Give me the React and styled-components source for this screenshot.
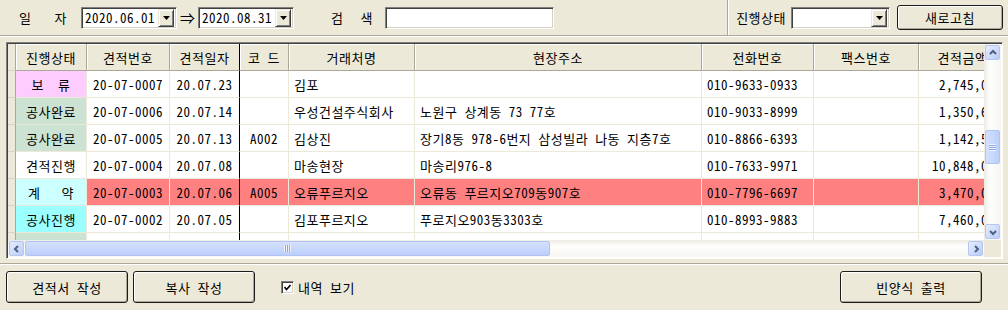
import React from 'react';
import styled, { createGlobalStyle } from 'styled-components';

const GlobalStyle = createGlobalStyle`
  html, body { margin: 0; padding: 0; background: #ECE9D8; }
  body {
    font-family: "Noto Sans CJK KR", "Noto Sans", sans-serif;
    font-size: 13px;
    letter-spacing: 0.5px;
    font-feature-settings: "hwid" 1;
    color: #000;
  }
`;

const COLS = [
  { key: 'status', title: '진행상태', w: 71, align: 'center' },
  { key: 'no', title: '견적번호', w: 83, align: 'center' },
  { key: 'date', title: '견적일자', w: 70, align: 'center', edge: true },
  { key: 'code', title: '코 드', w: 49, align: 'center' },
  { key: 'client', title: '거래처명', w: 126, align: 'left' },
  { key: 'addr', title: '현장주소', w: 287, align: 'left' },
  { key: 'tel', title: '전화번호', w: 112, align: 'left' },
  { key: 'fax', title: '팩스번호', w: 105, align: 'left' },
  { key: 'amount', title: '견적금액', w: 88, align: 'right' },
];

const TEMPLATE = '8px ' + COLS.map(c => c.w + 'px').join(' ');

const ROWS = [
  { status: '보  류', sbg: '#FFCCFF', no: '20-07-0007', date: '20.07.23', code: '', client: '김포', addr: '', tel: '010-9633-0933', fax: '', amount: '2,745,000' },
  { status: '공사완료', sbg: '#CCE2D2', no: '20-07-0006', date: '20.07.14', code: '', client: '우성건설주식회사', addr: '노원구 상계동 73 77호', tel: '010-9033-8999', fax: '', amount: '1,350,650' },
  { status: '공사완료', sbg: '#CCE2D2', no: '20-07-0005', date: '20.07.13', code: 'A002', client: '김상진', addr: '장기8동 978-6번지 삼성빌라 나동 지층7호', tel: '010-8866-6393', fax: '', amount: '1,142,500' },
  { status: '견적진행', sbg: '#FFFFFF', no: '20-07-0004', date: '20.07.08', code: '', client: '마송현장', addr: '마송리976-8', tel: '010-7633-9971', fax: '', amount: '10,848,000' },
  { status: '계   약', sbg: '#CCFFFF', bg: '#FF8080', no: '20-07-0003', date: '20.07.06', code: 'A005', client: '오류푸르지오', addr: '오류동 푸르지오709동907호', tel: '010-7796-6697', fax: '', amount: '3,470,000' },
  { status: '공사진행', sbg: '#9CFFFF', no: '20-07-0002', date: '20.07.05', code: '', client: '김포푸르지오', addr: '푸로지오903동3303호', tel: '010-8993-9883', fax: '', amount: '7,460,000' },
  { status: '', sbg: '#CCE2D2', no: '', date: '', code: '', client: '', addr: '', tel: '', fax: '', amount: '' },
];

const Page = styled.div`
  width: 1008px;
  height: 310px;
  background: #ECE9D8;
  display: flex;
  flex-direction: column;
  overflow: hidden;
`;

const TopBar = styled.div`
  height: 35px;
  flex-shrink: 0;
  display: flex;
  align-items: center;
  padding-left: 19px;
  border-bottom: 1px solid #ACA899;
  box-shadow: 0 1px 0 #fff;
`;

const SpreadLabel = styled.div`
  width: ${p => p.$w}px;
  margin-left: ${p => p.$ml || 0}px;
  display: flex;
  justify-content: space-between;
`;

const Label = styled.div`
  margin-left: ${p => p.$ml || 0}px;
  white-space: nowrap;
`;

const Sunken = styled.div`
  box-sizing: border-box;
  background: #fff;
  border: 1px solid;
  border-color: #808080 #FFFFFF #FFFFFF #808080;
  box-shadow: inset 1px 1px #404040, inset -1px -1px #D4D0C8;
`;

const Combo = styled(Sunken)`
  width: ${p => p.$w}px;
  height: 22px;
  margin-left: ${p => p.$ml || 0}px;
  display: flex;
  align-items: center;
  padding: 2px;
`;

const ComboText = styled.div`
  flex: 1;
  padding-left: 1px;
  line-height: 18px;
  white-space: nowrap;
  overflow: hidden;
`;

const DropBtn = styled.div`
  width: 16px;
  height: 18px;
  box-sizing: border-box;
  background: #ECE9D8;
  border: 1px solid;
  border-color: #ECE9D8 #404040 #404040 #ECE9D8;
  box-shadow: inset 1px 1px #fff, inset -1px -1px #808080;
  display: flex;
  align-items: center;
  justify-content: center;
`;

const ArrowSign = styled.div`
  width: 21px;
  text-align: center;
  font-size: 15px;
  letter-spacing: 0;
`;

const TextBox = styled(Sunken)`
  width: ${p => p.$w}px;
  height: 22px;
  margin-left: ${p => p.$ml || 0}px;
`;

const Divider = styled.div`
  align-self: stretch;
  margin-left: auto;
  border-left: 1px solid #ACA899;
  border-right: 1px solid #fff;
`;

const Button = styled.button`
  width: ${p => p.$w}px;
  height: ${p => p.$h}px;
  margin-left: ${p => p.$ml || 0}px;
  box-sizing: border-box;
  padding: 0;
  border: 1px solid #1C1C1C;
  border-radius: 3px;
  background: #ECE9D8;
  box-shadow: inset 1px 1px #fff, inset -1px -1px #ACA899;
  font: inherit;
  letter-spacing: inherit;
  font-feature-settings: inherit;
  color: #000;
`;

const GridFrame = styled.div`
  box-sizing: border-box;
  width: 997px;
  height: 217px;
  margin: 6px 0 0 6px;
  flex-shrink: 0;
  border: 1px solid;
  border-color: #808080 #FFFFFF #FFFFFF #808080;
  box-shadow: inset 1px 1px #404040;
  padding: 1px 0 0 1px;
  display: grid;
  grid-template-columns: 976px 17px;
  grid-template-rows: 196px 17px;
  background: #fff;
`;

const Viewport = styled.div`
  overflow: hidden;
  background: #fff;
`;

const Row = styled.div`
  display: grid;
  grid-template-columns: ${TEMPLATE};
  width: max-content;
`;

const HeadCell = styled.div`
  box-sizing: border-box;
  height: 27px;
  background: #ECE9D8;
  border-right: 1px solid ${p => (p.$edge ? '#000' : '#ACA899')};
  border-bottom: 1px solid #ACA899;
  box-shadow: inset 1px 1px #fff;
  display: flex;
  align-items: center;
  justify-content: center;
  white-space: pre;
  overflow: hidden;
`;

const IndicatorCell = styled.div`
  box-sizing: border-box;
  height: 27px;
  background: #ECE9D8;
  border-right: 1px solid #ACA899;
  border-bottom: 1px solid #D8D4C4;
`;

const Cell = styled.div`
  box-sizing: border-box;
  height: 27px;
  background: ${p => p.$bg || '#fff'};
  border-right: 1px solid ${p => (p.$edge ? '#000' : '#ECE9D8')};
  border-bottom: 1px solid #ECE9D8;
  display: flex;
  align-items: center;
  justify-content: ${p => (p.$align === 'right' ? 'flex-end' : p.$align === 'left' ? 'flex-start' : 'center')};
  padding: ${p => (p.$align === 'right' ? '0 4px 0 0' : p.$align === 'left' ? '0 0 0 5px' : '0')};
  white-space: pre;
  overflow: hidden;
`;

const HTrack = styled.div`
  display: flex;
  align-items: center;
  padding: 0 1px 0 1px;
  background: linear-gradient(to bottom, #EDEBE3, #FEFEFD 35%, #F6F5F0);
`;

const VTrack = styled.div`
  display: flex;
  flex-direction: column;
  align-items: center;
  padding: 1px 0;
  background: linear-gradient(to right, #EDEBE3, #FEFEFD 35%, #F6F5F0);
`;

const ScrollBtn = styled.div`
  width: 15px;
  height: 15px;
  box-sizing: border-box;
  flex-shrink: 0;
  border: 1px solid #B4C6F3;
  border-radius: 2px;
  background: linear-gradient(135deg, #E6EDFE, #BACDF8);
  display: flex;
  align-items: center;
  justify-content: center;
`;

const Thumb = styled.div`
  box-sizing: border-box;
  flex-shrink: 0;
  width: ${p => (p.$vertical ? '15px' : p.$len + 'px')};
  height: ${p => (p.$vertical ? p.$len + 'px' : '15px')};
  margin: ${p => (p.$vertical ? `${p.$offset}px 0 0 0` : `0 0 0 ${p.$offset}px`)};
  border: 1px solid #B0C3F2;
  border-radius: 2px;
  background: ${p => (p.$vertical
    ? 'linear-gradient(to right, #D4E0FE, #BCCFFA)'
    : 'linear-gradient(to bottom, #D4E0FE, #BCCFFA)')};
  display: flex;
  align-items: center;
  justify-content: center;
`;

const Grip = styled.div`
  width: ${p => (p.$vertical ? '7px' : '7px')};
  height: ${p => (p.$vertical ? '7px' : '7px')};
  background: ${p => (p.$vertical
    ? 'repeating-linear-gradient(to bottom, #EEF3FE 0 1px, #8CA6E0 1px 2px)'
    : 'repeating-linear-gradient(to right, #EEF3FE 0 1px, #8CA6E0 1px 2px)')};
`;

const Spacer = styled.div`
  flex: 1;
`;

const Corner = styled.div`
  background: #ECE9D8;
`;

const Separator = styled.div`
  height: 1px;
  margin-top: 4px;
  background: #ACA899;
  box-shadow: 0 1px 0 #fff;
  flex-shrink: 0;
`;

const BottomBar = styled.div`
  display: flex;
  align-items: center;
  padding: 7px 26px 0 6px;
`;

const CheckBox = styled.div`
  width: 13px;
  height: 13px;
  margin-left: ${p => p.$ml || 0}px;
  box-sizing: border-box;
  background: #fff;
  border: 1px solid;
  border-color: #808080 #fff #fff #808080;
  box-shadow: inset 1px 1px #404040, inset -1px -1px #D4D0C8;
  display: flex;
  align-items: center;
  justify-content: center;
`;

const Chevron = ({ dir }) => {
  const pts = {
    left: '5,1 2,4 5,7',
    right: '3,1 6,4 3,7',
    up: '1,5 4,2 7,5',
    down: '1,3 4,6 7,3',
  }[dir];
  return (
    <svg width="8" height="8" viewBox="0 0 8 8">
      <polyline points={pts} fill="none" stroke="#4D6185" strokeWidth="2" />
    </svg>
  );
};

const Triangle = () => (
  <svg width="7" height="4" viewBox="0 0 7 4">
    <polygon points="0,0 7,0 3.5,4" fill="#000" />
  </svg>
);

function ComboBox({ width, value, ml }) {
  return (
    <Combo $w={width} $ml={ml}>
      <ComboText>{value}</ComboText>
      <DropBtn><Triangle /></DropBtn>
    </Combo>
  );
}

export default function App() {
  return (
    <Page>
      <GlobalStyle />
      <TopBar>
        <SpreadLabel $w={48}><span>일</span><span>자</span></SpreadLabel>
        <ComboBox width={96} value="2020.06.01" ml={14} />
        <ArrowSign>⇒</ArrowSign>
        <ComboBox width={96} value="2020.08.31" />
        <SpreadLabel $w={42} $ml={37}><span>검</span><span>색</span></SpreadLabel>
        <TextBox $w={169} $ml={12} />
        <Divider />
        <Label $ml={7}>진행상태</Label>
        <ComboBox width={99} value="" ml={5} />
        <Button $w={106} $h={25} $ml={7}>새로고침</Button>
        <div style={{ width: 5 }} />
      </TopBar>

      <GridFrame>
        <Viewport>
          <Row>
            <IndicatorCell />
            {COLS.map(c => (
              <HeadCell key={c.key} $edge={c.edge}>{c.title}</HeadCell>
            ))}
          </Row>
          {ROWS.map((r, i) => (
            <Row key={i}>
              <IndicatorCell />
              {COLS.map(c => (
                <Cell
                  key={c.key}
                  $edge={c.edge}
                  $align={c.align}
                  $bg={c.key === 'status' ? r.sbg : r.bg}
                >
                  {r[c.key]}
                </Cell>
              ))}
            </Row>
          ))}
        </Viewport>
        <VTrack>
          <ScrollBtn><Chevron dir="up" /></ScrollBtn>
          <Thumb $vertical $len={34} $offset={70}><Grip $vertical /></Thumb>
          <Spacer />
          <ScrollBtn><Chevron dir="down" /></ScrollBtn>
        </VTrack>
        <HTrack>
          <ScrollBtn><Chevron dir="left" /></ScrollBtn>
          <Thumb $len={525} $offset={1}><Grip /></Thumb>
          <Spacer />
          <ScrollBtn><Chevron dir="right" /></ScrollBtn>
        </HTrack>
        <Corner />
      </GridFrame>

      <Separator />
      <BottomBar>
        <Button $w={122} $h={32}>견적서 작성</Button>
        <Button $w={122} $h={32} $ml={5}>복사 작성</Button>
        <CheckBox $ml={26}>
          <svg width="7" height="7" viewBox="0 0 7 7">
            <polyline points="0.5,3 2.5,5.5 6.5,1" fill="none" stroke="#000" strokeWidth="1.6" />
          </svg>
        </CheckBox>
        <Label $ml={4}>내역 보기</Label>
        <Spacer />
        <Button $w={142} $h={32}>빈양식 출력</Button>
      </BottomBar>
    </Page>
  );
}
